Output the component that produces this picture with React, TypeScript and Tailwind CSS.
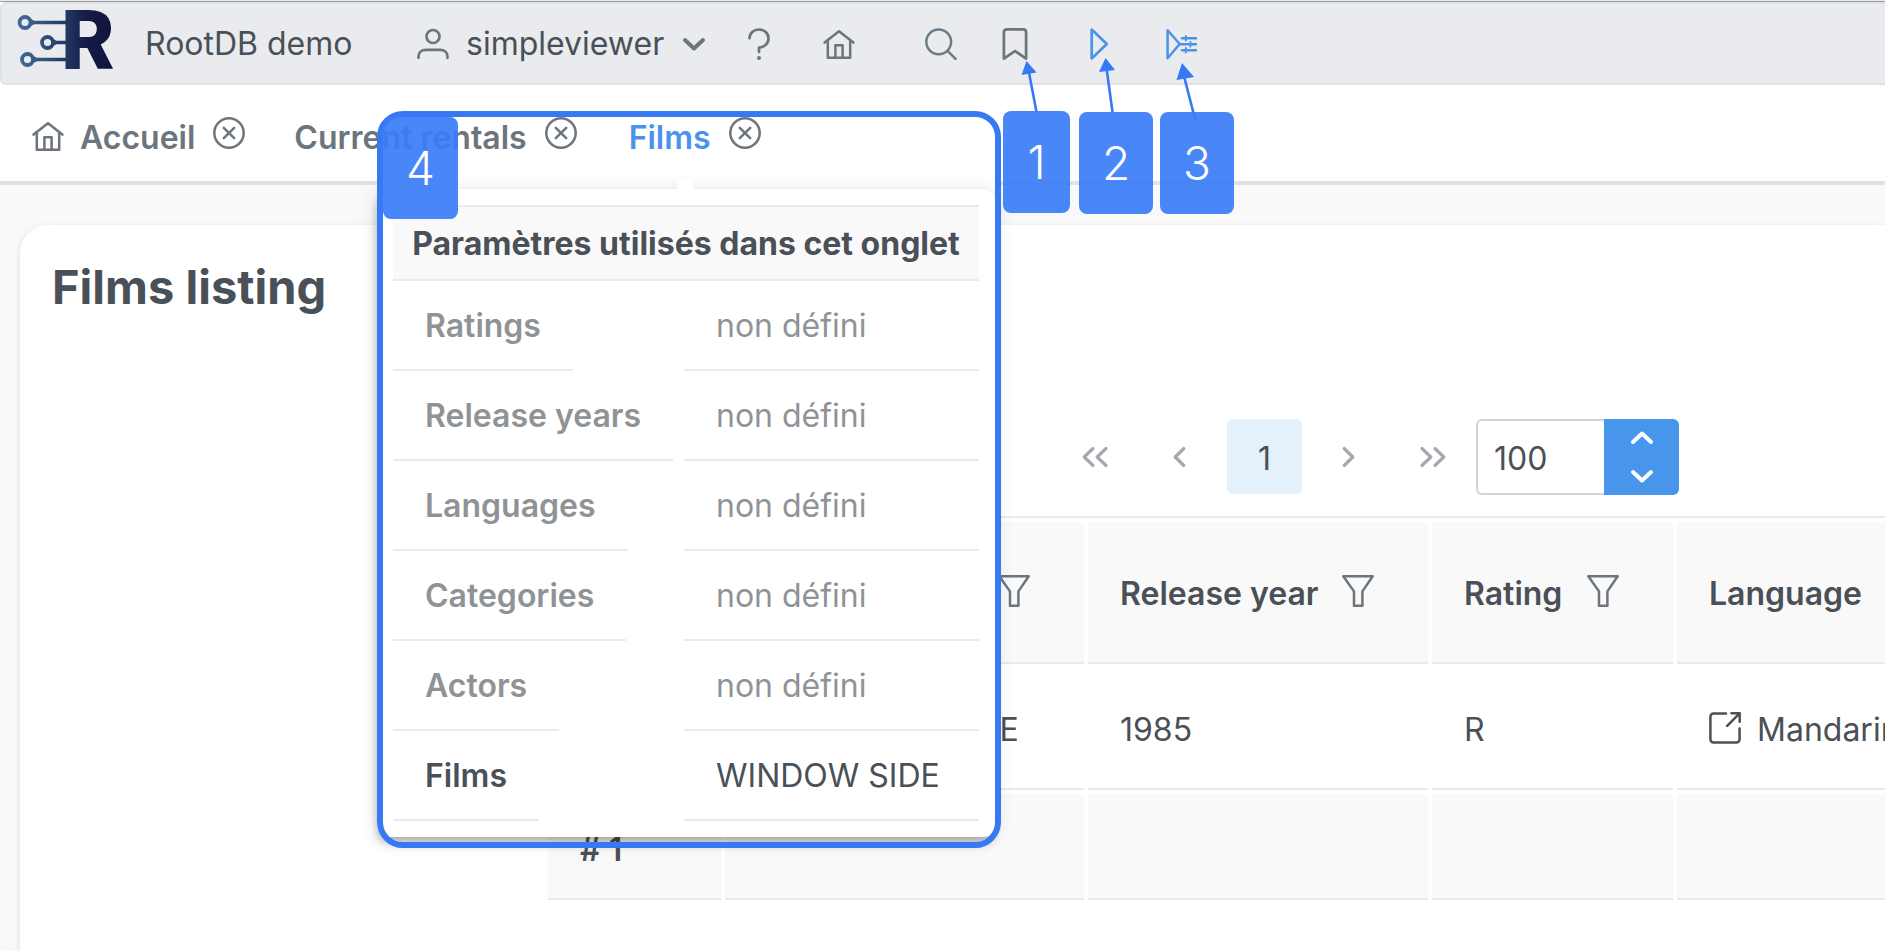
import type { ReactNode } from "react";

type IconProps = { className?: string };

function Glyph({ className = "", size = 32, width = 2.5, children }: IconProps & { size?: number; width?: number; children: ReactNode }) {
  return (
    <svg
      width={size}
      height={size}
      viewBox="0 0 32 32"
      fill="none"
      stroke="currentColor"
      strokeWidth={width}
      strokeLinecap="round"
      strokeLinejoin="round"
      aria-hidden="true"
      className={`shrink-0 ${className}`}
    >
      {children}
    </svg>
  );
}

const UserIcon = () => (
  <Glyph width={2.7}>
    <circle cx="16" cy="8.500" r="6.500" />
    <path d="M1.500 29.800v-1.200c0-4.300 3.400-6.800 7.400-6.800h14.200c4 0 7.400 2.500 7.400 6.800v1.200" />
  </Glyph>
);

const ChevronIcon = () => (
  <Glyph width={4}>
    <path d="M7 12 16 20.500l9-8.500" />
  </Glyph>
);

const QuestionIcon = () => (
  <Glyph width={2.7}>
    <path d="M6.500 10.200C6.500 5 10.700 1.500 16 1.500s9.500 3.800 9.500 9c0 5.100-4.100 8.700-9.500 9.100V24" />
    <circle cx="16" cy="30" r="1" fill="currentColor" strokeWidth="2" />
  </Glyph>
);

const HomeIcon = () => (
  <Glyph>
    <path d="M1.600 14.600 16 3.200l14.400 11.400" />
    <path d="M4.800 12.500v17.300h22.400V12.500" />
    <path d="M12.400 29.400V17.200h7.200v12.200" />
  </Glyph>
);

const SearchIcon = () => (
  <Glyph className="text-[#6b7c88]">
    <circle cx="13.700" cy="13.800" r="12.400" />
    <path d="m22.600 22.800 8 8" />
  </Glyph>
);

const BookmarkIcon = () => (
  <Glyph width={2.7}>
    <path d="M4.900 30.600V4.300c0-1.700 1.300-2.900 3.100-2.900h16c1.800 0 3.100 1.200 3.100 2.900v26.300L16 23 4.900 30.600Z" />
  </Glyph>
);

const PlayIcon = () => (
  <Glyph width={2.7}>
    <path d="M8.700 1.600v28.800L23.800 16 8.700 1.600Z" />
  </Glyph>
);

const PlayOptionsIcon = () => (
  <Glyph>
    <path d="M2.600 2.200v28L14.700 16 2.600 2.200Z" />
    <path d="M17 10.300h14M15.500 16.200H31M17 22.200h14" />
    <path d="M20.800 8v4.600M25.400 14v4.600M20.800 20v4.600" strokeWidth="2" />
  </Glyph>
);

const CloseIcon = () => (
  <Glyph>
    <circle cx="16" cy="16" r="14.700" />
    <path d="m10.800 10.800 10.400 10.400M21.200 10.800 10.800 21.200" />
  </Glyph>
);

const FilterIcon = () => (
  <Glyph className="text-[#6c757d]">
    <path d="M1.300 1.200h29.400L20.400 16.400V30.700h-8.400V16.400L1.300 1.200Z" />
  </Glyph>
);

const ExternalIcon = () => (
  <Glyph>
    <path d="M17 1.500H4.600a3.200 3.200 0 0 0-3.200 3.200v22.600a3.200 3.200 0 0 0 3.200 3.200h22.800a3.200 3.200 0 0 0 3.200-3.200V16.500" />
    <path d="M22.500 1.300h8.200v8.400M30.300 1.700 18.200 13.900" />
  </Glyph>
);

const ArrowLeft = () => <path d="M20.800 7.500 12.200 16l8.600 8.500" />;

const FirstIcon = () => (
  <Glyph width={3.2}>
    <path d="M14 7.500 5.200 16l8.800 8.500M27 7.500 18.200 16l8.800 8.500" />
  </Glyph>
);
const PrevIcon = () => (
  <Glyph width={3.2}>
    <ArrowLeft />
  </Glyph>
);
const NextIcon = () => (
  <Glyph width={3.2} className="rotate-180">
    <ArrowLeft />
  </Glyph>
);
const LastIcon = () => (
  <Glyph width={3.2}>
    <path d="m5 7.500 8.800 8.500L5 24.500M18 7.500l8.800 8.500-8.800 8.500" />
  </Glyph>
);

function Logo() {
  return (
    <svg width="98" height="64" viewBox="0 0 98 64" aria-label="RootDB" role="img" className="shrink-0 overflow-visible">
      <defs>
        <linearGradient id="ink" gradientUnits="userSpaceOnUse" x1="0" y1="0" x2="98" y2="0">
          <stop offset="0" stopColor="#416d98" />
          <stop offset="0.480" stopColor="#233a64" />
          <stop offset="0.680" stopColor="#151c48" />
          <stop offset="1" stopColor="#11123a" />
        </linearGradient>
      </defs>
      <g fill="none" stroke="url(#ink)" strokeWidth="3.800">
        <circle cx="7" cy="14.500" r="5.500" />
        <circle cx="29.500" cy="34.500" r="5.500" />
        <circle cx="9.500" cy="51.500" r="5.500" />
      </g>
      <g fill="url(#ink)">
        <path d="M11.500 10.500 16.500 12.700H49v3.600H16.500l-5 2.200ZM34 30.500l4.500 2.200H49v3.600H38.500L34 38.500ZM14 47.500l5 2.200h30v3.600H19l-5 2.200Z" />
        <text x="43" y="61" fontSize="83" fontWeight="900" fontFamily="Roboto, sans-serif">
          R
        </text>
      </g>
    </svg>
  );
}

const parameters = [
  { name: "Ratings", value: "non défini", set: false },
  { name: "Release years", value: "non défini", set: false },
  { name: "Languages", value: "non défini", set: false },
  { name: "Categories", value: "non défini", set: false },
  { name: "Actors", value: "non défini", set: false },
  { name: "Films", value: "WINDOW SIDE", set: true },
];

function Toolbar() {
  return (
    <header className="flex h-[83px] items-center rounded-l-md border-2 border-r-0 border-[#dee2e6] bg-[#e9ebee] pl-4 text-[#6c757d]">
      <div className="pb-2"><Logo /></div>
      <span className="ml-7 w-[240px] pl-px text-[#495057]">RootDB demo</span>
      <button type="button" className="ml-[33px] flex items-center gap-[17px]">
        <UserIcon />
        <span className="w-[195px] text-left text-[#495057]">simpleviewer</span>
        <ChevronIcon />
      </button>
      <button type="button" aria-label="Aide" className="ml-[33px]"><QuestionIcon /></button>
      <button type="button" aria-label="Accueil" className="ml-[48px]"><HomeIcon /></button>
      <button type="button" aria-label="Rechercher" className="ml-[70px]"><SearchIcon /></button>
      <button type="button" aria-label="Favori" className="ml-[42px]"><BookmarkIcon /></button>
      <button type="button" aria-label="Exécuter" className="ml-[52px] text-[#4b93ea]"><PlayIcon /></button>
      <button type="button" aria-label="Exécuter avec options" className="ml-[50px] text-[#4b93ea]"><PlayOptionsIcon /></button>
    </header>
  );
}

function Tab({ label, active, icon, className = "" }: { label: string; active?: boolean; icon?: ReactNode; className?: string }) {
  return (
    <div className={`flex items-center ${className}`}>
      <a href="#" className={`flex items-center gap-4 font-semibold ${active ? "text-[#4b93ea]" : ""}`}>
        {icon && <span className="pb-1">{icon}</span>}
        {label}
      </a>
      <button type="button" aria-label={`Fermer ${label}`} className="ml-[18px] pb-2.5"><CloseIcon /></button>
    </div>
  );
}

function Tabs() {
  return (
    <nav className="flex h-[100px] items-center border-b-4 border-[#dee2e6] bg-white pl-8 pt-[9px] text-[#6c757d]">
      <Tab label="Accueil" icon={<HomeIcon />} />
      <Tab label="Current rentals" className="ml-[49px]" />
      <Tab label="Films" active className="ml-[52px]" />
    </nav>
  );
}

function Paginator() {
  return (
    <div className="flex h-[99px] items-start border-b-2 border-[#ebebec] pl-[509px] text-[#a5a8ad]">
      <button type="button" aria-label="Première page" className="flex size-[75px] items-center justify-center"><FirstIcon /></button>
      <button type="button" aria-label="Page précédente" className="ml-[9px] flex size-[75px] items-center justify-center"><PrevIcon /></button>
      <button type="button" className="ml-[11px] size-[75px] rounded-md bg-[#e4f1fb] pt-1 text-[#495057]">1</button>
      <button type="button" aria-label="Page suivante" className="ml-[9px] flex size-[75px] items-center justify-center"><NextIcon /></button>
      <button type="button" aria-label="Dernière page" className="ml-[9px] flex size-[75px] items-center justify-center"><LastIcon /></button>
      <div className="ml-[6px] flex h-[76px]">
        <input
          aria-label="Lignes par page"
          defaultValue="100"
          className="w-[128px] rounded-l-md border-2 border-r-0 border-[#ced4da] bg-white pl-4 pt-1 text-[#495057] outline-none"
        />
        <div className="flex w-[75px] flex-col overflow-hidden rounded-r-md bg-[#4895ec] text-white">
          <button type="button" aria-label="Augmenter" className="flex flex-1 items-center justify-center">
            <span className="rotate-180"><ChevronIcon /></span>
          </button>
          <button type="button" aria-label="Diminuer" className="flex flex-1 items-center justify-center">
            <ChevronIcon />
          </button>
        </div>
      </div>
    </div>
  );
}

const head = "h-[142px] border-b-2 border-[#e9eaeb] bg-[#f9f9f9] px-8 pt-1 text-left font-semibold";
const cell = "h-[122px] border-b-2 border-[#e9eaeb] px-8 pt-1";
const foot = "h-[106px] border-b-2 border-[#e9eaeb] bg-[#f9f9f9] px-8 pt-2 text-left font-semibold";

function HeadLabel({ children }: { children?: ReactNode }) {
  return (
    <div className="flex items-center pr-[22px]">
      {children}
      <button type="button" aria-label="Filtrer" className="ml-auto pb-1.5"><FilterIcon /></button>
    </div>
  );
}

function FilmsTable() {
  return (
    <table className="-ml-1 w-[1660px] table-fixed border-separate border-spacing-1">
      <colgroup>
        <col className="w-[173px]" />
        <col className="w-[359px]" />
        <col className="w-[340px]" />
        <col className="w-[241px]" />
        <col />
      </colgroup>
      <thead>
        <tr>
          <th className={head} />
          <th className={head}><HeadLabel /></th>
          <th className={head}><HeadLabel>Release year</HeadLabel></th>
          <th className={head}><HeadLabel>Rating</HeadLabel></th>
          <th className={head}>Language</th>
        </tr>
      </thead>
      <tbody>
        <tr>
          <td className={cell} />
          <td className={cell}><a href="#" className="flex items-center gap-1.5 whitespace-nowrap"><ExternalIcon />WINDOW SIDE</a></td>
          <td className={cell}>1985</td>
          <td className={cell}>R</td>
          <td className={cell}><a href="#" className="flex items-center gap-4"><span className="pb-1"><ExternalIcon /></span>Mandarin</a></td>
        </tr>
      </tbody>
      <tfoot>
        <tr>
          <th className={foot}># 1</th>
          <td className={foot} />
          <td className={foot} />
          <td className={foot} />
          <td className={foot} />
        </tr>
      </tfoot>
    </table>
  );
}

function ParametersPopup() {
  return (
    <div className="absolute left-[377px] top-[155px] w-[618px] bg-white pt-[34px]">
      <div className="relative rounded-xl bg-white p-4 shadow-[0_4px_8px_-2px_rgba(0,0,0,0.2),0_8px_10px_0_rgba(0,0,0,0.14),0_2px_20px_0_rgba(0,0,0,0.12)]">
        <span className="absolute -top-2 left-1/2 h-2 w-4 -translate-x-1/2 bg-white" />
        <table className="w-full table-fixed border-separate border-spacing-0 text-[#909396]">
          <colgroup>
            <col className="w-[291px]" />
            <col />
          </colgroup>
          <thead>
            <tr>
              <th colSpan={2} className="h-[76px] whitespace-nowrap border-y-2 border-[#e9eaeb] bg-[#f9f9f9] p-0 pt-0.5 text-center font-bold text-[#495057]">
                Paramètres utilisés dans cet onglet
              </th>
            </tr>
          </thead>
          <tbody className="leading-[86px]">
            {parameters.map((p) => (
              <tr key={p.name} className={p.set ? "text-[#495057]" : ""}>
                <th scope="row" className="p-0 text-left font-semibold">
                  <div className="w-fit whitespace-nowrap border-b-2 border-[#e9eaeb] px-8 pt-0.5">{p.name}</div>
                </th>
                <td className="p-0">
                  <div className="border-b-2 border-[#e9eaeb] px-8 pt-0.5">{p.value}</div>
                </td>
              </tr>
            ))}
          </tbody>
        </table>
      </div>
    </div>
  );
}

const badge = "absolute flex h-[102px] items-center justify-center rounded-lg bg-[#3a7cf7]/92 text-[46px] font-light text-white";

function Annotations() {
  return (
    <>
      <div className="absolute left-[377px] top-[111px] h-[737px] w-[624px] rounded-[26px] border-[6px] border-[#3779f4]" />
      <svg className="absolute left-[1000px] top-[50px]" width="240" height="80" viewBox="1000 50 240 80" fill="#3779f4" stroke="#3779f4" aria-hidden="true">
        <path d="M1028.500 70 1036.500 112M1106.500 68 1112.500 112M1184 76 1195.500 121" strokeWidth="2.600" />
        <path stroke="none" d="M1026.500 61 1036.500 72.500 1021.500 75ZM1105.500 58 1115 70 1099 72ZM1182 63 1194 77 1176.500 80Z" />
      </svg>
      <span className={`${badge} left-[1003px] top-[111px] w-[67px]`}>1</span>
      <span className={`${badge} left-[1079px] top-[112px] w-[74px]`}>2</span>
      <span className={`${badge} left-[1160px] top-[112px] w-[74px]`}>3</span>
      <span className={`${badge} left-[383px] top-[117px] w-[75px]`}>4</span>
    </>
  );
}

export default function App() {
  return (
    <div className="relative flex min-h-screen flex-col overflow-hidden bg-[#f9f9f9] font-['Inter','Liberation_Sans',sans-serif] text-[32px] leading-10 text-[#495057]">
      <div className="h-[2px] border-b border-[#9b9da1] bg-[#e9ebee]" />
      <div className="bg-white"><Toolbar /></div>
      <Tabs />
      <main className="ml-5 mt-10 flex-1 rounded-tl-[28px] bg-white pl-8 pt-8 shadow-[0_2px_6px_rgba(0,0,0,0.12)]">
        <h1 className="pb-[102px] text-[47px] font-bold leading-[60px]">Films listing</h1>
        <div className="ml-[496px]">
          <Paginator />
          <FilmsTable />
        </div>
      </main>
      <ParametersPopup />
      <Annotations />
    </div>
  );
}
